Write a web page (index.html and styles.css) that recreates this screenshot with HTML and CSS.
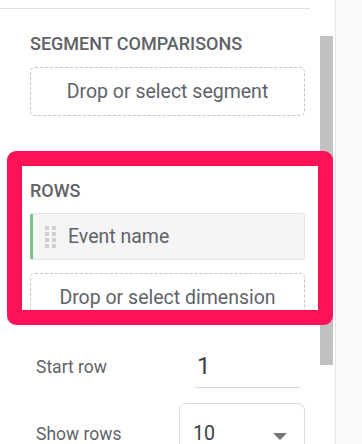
FILE: index.html
```html
<!DOCTYPE html>
<html lang="en">
<head>
  <meta charset="UTF-8" />
  <title>Setup panel</title>
  <link rel="stylesheet" href="styles.css">
</head>
<body>

  <div class="page">
    <!-- Settings panel -->
    <div class="panel">
      <div class="panel-body">
        <div class="rule"></div>

        <div class="section segments">
          <h3>Segment comparisons</h3>
          <div class="drop-zone">Drop or select segment</div>
        </div>

        <div class="section rows">
          <h3>Rows</h3>
          <div class="chip">
            <span class="handle">
              <i></i><i></i><i></i><i></i><i></i><i></i><i></i><i></i>
            </span>
            <span>Event name</span>
          </div>
          <div class="drop-zone">Drop or select dimension</div>
        </div>

        <div class="field start-row">
          <label>Start row</label>
          <div class="text-input">1</div>
        </div>

        <div class="field show-rows">
          <label>Show rows</label>
          <div class="select">
            <span>10</span>
            <span class="caret"></span>
          </div>
        </div>
      </div>

      <div class="scrollbar">
        <div class="thumb"></div>
      </div>
    </div>

    <div class="side"></div>
  </div>

  <!-- Annotation frame over the rows section -->
  <div class="highlight"></div>

</body>
</html>
```

FILE: styles.css
```css
* {
  box-sizing: border-box;
  margin: 0;
  padding: 0;
}

body {
  font-family: Roboto, "Liberation Sans", sans-serif;
  background: #fff;
  color: #5f6368;
  overflow: hidden;
}

.page {
  display: flex;
  height: 444px;
}

/* Panel */
.panel {
  width: 336px;
  display: flex;
  border-right: 1px solid #e6e6e6;
  background: #fff;
}

.panel-body {
  width: 320px;
  padding-top: 8px;
}

.rule {
  width: 310px;
  height: 1px;
  background: #e0e0e0;
}

.section {
  padding-left: 30px;
  padding-right: 15px;
}

.section h3 {
  font-size: 18px;
  font-weight: 500;
  text-transform: uppercase;
  color: #5f6368;
  line-height: 20px;
}

.segments {
  padding-top: 25px;
}

.segments h3 {
  margin-bottom: 13px;
}

.rows {
  padding-top: 65px;
}

.rows h3 {
  margin-bottom: 12px;
}

.drop-zone {
  height: 49px;
  border: 1px dashed #c4c4c4;
  border-radius: 5px;
  display: flex;
  align-items: center;
  justify-content: center;
  font-size: 19.5px;
  color: #5f6368;
}

.chip {
  height: 47px;
  display: flex;
  align-items: center;
  gap: 12px;
  padding-left: 12px;
  margin-bottom: 13px;
  background: #f5f5f5;
  border: 1px solid #e3e3e3;
  border-left: 3px solid #7dbf8a;
  border-radius: 3px;
  font-size: 19.5px;
}

.handle {
  display: grid;
  grid-template-columns: 4px 4px;
  gap: 2px 3px;
}

.handle i {
  width: 4px;
  height: 4px;
  background: #cfcfcf;
}

/* Form fields */
.field {
  display: flex;
  align-items: flex-start;
  padding-left: 36px;
}

.field label {
  width: 143px;
  font-size: 17.5px;
  line-height: 32px;
}

.start-row {
  margin-top: 29px;
}

.text-input {
  width: 105px;
  height: 37px;
  margin-left: 16px;
  padding-left: 2px;
  font-size: 24px;
  line-height: 30px;
  color: #3c4043;
  border-bottom: 1px solid #d9d9d9;
}

.show-rows {
  margin-top: 15px;
}

.show-rows label {
  margin-top: 15px;
}

.select {
  width: 126px;
  height: 60px;
  display: flex;
  justify-content: space-between;
  padding: 18px 17px 0 13px;
  border: 1px solid #dadce0;
  border-radius: 7px;
  font-size: 19.5px;
  line-height: 24px;
  color: #3c4043;
}

.caret {
  margin-top: 11px;
  width: 0;
  height: 0;
  border-left: 7px solid transparent;
  border-right: 7px solid transparent;
  border-top: 7px solid #757575;
}

/* Scrollbar */
.scrollbar {
  width: 15px;
  padding-top: 36px;
}

.thumb {
  width: 13px;
  height: 329px;
  background: #c1c1c1;
}

.side {
  flex: 1;
  background: #f8f9fa;
}

/* Annotation */
.highlight {
  position: absolute;
  left: 7px;
  top: 151px;
  width: 326px;
  height: 174px;
  border: 15px solid #fd1157;
  border-radius: 9px;
}
```
